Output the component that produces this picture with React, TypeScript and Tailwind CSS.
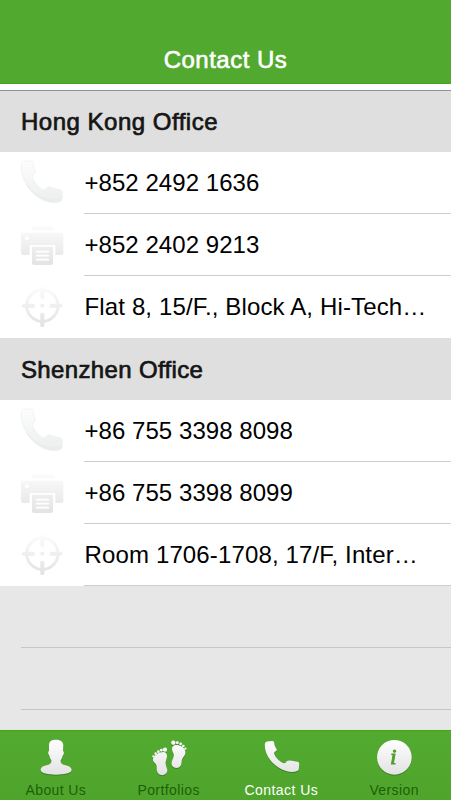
import type { ReactNode } from "react";

const offices = [
  {
    name: "Hong Kong Office",
    phone: "+852 2492 1636",
    fax: "+852 2402 9213",
    address: "Flat 8, 15/F., Block A, Hi-Tech…"
  },
  {
    name: "Shenzhen Office",
    phone: "+86 755 3398 8098",
    fax: "+86 755 3398 8099",
    address: "Room 1706-1708, 17/F, Inter…"
  }
];

function PhoneIcon() {
  return (
    <svg viewBox="24 6 144 186" className="h-[62px] w-12 shrink-0" aria-hidden>
      <defs>
        <linearGradient id="phone" x1="0" y1="0" x2="0" y2="1">
          <stop offset="0" stopColor="#fdfdfd" />
          <stop offset="1" stopColor="#ebeeed" />
        </linearGradient>
      </defs>
      <path
        d="M34 43C34 36 39 33 47 33L62 33C68 33 70 36 70 41C70 50 72 58 76 65C78 69 67 75 67 81C68 91 87 114 98 119C106 121 109 110 117 110C127 111 137 118 150 119C155 120 158 124 157 131L156 148C155 155 146 158 133 158C102 158 69 136 51 107C39 88 33 64 34 43Z"
        fill="url(#phone)"
        stroke="#eaefee"
        strokeWidth="2"
      />
      <path d="M51 105C70 132 99 151 128 150C141 149 149 147 156 143" fill="none" stroke="#e3e7e6" strokeWidth="2" />
    </svg>
  );
}

function PrinterIcon() {
  return (
    <svg viewBox="24 192 144 186" className="h-[62px] w-12 shrink-0" aria-hidden>
      <defs>
        <linearGradient id="printer" gradientUnits="userSpaceOnUse" x1="0" y1="226" x2="0" y2="345">
          <stop offset="0" stopColor="#fcfcfc" />
          <stop offset="1" stopColor="#e3e3e3" />
        </linearGradient>
      </defs>
      <g fill="url(#printer)">
        <path d="M66 229H130V241H66Z" />
        <path d="M36 248H157Q160 248 160 251V309Q160 315 154 315H136V285H59V315H39Q33 315 33 309V251Q33 248 36 248Z" />
        <path d="M66 290H129V340Q129 345 124 345H71Q66 345 66 340Z" />
      </g>
      <circle cx="51" cy="265" r="6" fill="#fff" />
      <path d="M80 305H115M80 317H115M80 329H115" stroke="#fff" strokeWidth="5" strokeLinecap="round" />
    </svg>
  );
}

function TargetIcon() {
  return (
    <svg viewBox="24 378 144 186" className="h-[62px] w-12 shrink-0" aria-hidden>
      <defs>
        <linearGradient id="target" gradientUnits="userSpaceOnUse" x1="0" y1="412" x2="0" y2="530">
          <stop offset="0" stopColor="#fcfcfc" />
          <stop offset="1" stopColor="#e1e1e1" />
        </linearGradient>
      </defs>
      <circle cx="97" cy="467" r="47" fill="none" stroke="url(#target)" strokeWidth="9" />
      <g fill="url(#target)">
        <rect x="91" y="409" width="12" height="37" rx="5" />
        <rect x="91" y="488" width="12" height="43" rx="5" />
        <path d="M33 467L41 461H70Q75 461 75 467Q75 473 70 473H41Z" />
        <path d="M160 467L152 461H124Q119 461 119 467Q119 473 124 473H152Z" />
        <circle cx="97" cy="467" r="6" />
      </g>
    </svg>
  );
}

function Row({ icon, children }: { icon: ReactNode; children: ReactNode }) {
  return (
    <li className="flex h-[62px] bg-white pl-[18px] tracking-[0.05px] last:tracking-[0.14px]">
      {icon}
      <div className="ml-[18px] flex min-w-0 flex-1 items-center border-b border-[#cdcdcf] pl-[0.5px] whitespace-nowrap text-black">
        {children}
      </div>
    </li>
  );
}

function TabIcon({ viewBox, children }: { viewBox: string; children: ReactNode }) {
  return (
    <svg viewBox={viewBox} className="size-10 drop-shadow-[0_1px_0.5px_rgba(30,80,10,0.45)]" fill="url(#tab)" aria-hidden>
      <defs>
        <linearGradient id="tab" gradientUnits="userSpaceOnUse" x1="0" y1="44" x2="0" y2="150">
          <stop offset="0" stopColor="#ffffff" />
          <stop offset="1" stopColor="#e2e2e2" />
        </linearGradient>
      </defs>
      {children}
    </svg>
  );
}

const tabs = [
  {
    label: "About Us",
    icon: (
      <TabIcon viewBox="109 36 120 120">
        <path d="M148 60C148 49 156 44 167 44C182 43 191 50 191 61L190 78C194 80 193 90 189 92C188 98 185 102 183 106C182 116 188 119 198 121C209 123 216 128 216 136C214 145 193 149 169 149C145 149 125 145 123 136C122 128 129 123 140 121C151 119 156 115 155 106C152 102 150 97 149 92C145 89 144 80 148 78Z" />
      </TabIcon>
    )
  },
  {
    label: "Portfolios",
    icon: (
      <TabIcon viewBox="447 36 120 120">
        <path d="M459 101C462 89 480 80 492 81C504 84 502 97 498 107C494 119 501 127 502 136C502 147 491 152 483 150C473 148 469 138 470 127C471 113 457 113 459 101Z" />
        <circle cx="495" cy="74" r="6.5" />
        <circle cx="484" cy="76" r="4.4" />
        <circle cx="475" cy="80" r="4.2" />
        <circle cx="467" cy="86" r="4" />
        <circle cx="460" cy="94" r="3.6" />
        <path d="M516 72C516 62 524 58 535 61C549 64 558 74 556 85C554 95 546 98 545 109C545 120 541 129 529 129C518 128 513 120 515 111C517 102 523 96 521 88C520 83 516 79 516 72Z" />
        <circle cx="520" cy="53" r="6.5" />
        <circle cx="532" cy="53" r="4.4" />
        <circle cx="542" cy="57" r="4.2" />
        <circle cx="550" cy="63" r="4" />
        <circle cx="556" cy="71" r="3.6" />
      </TabIcon>
    )
  },
  {
    label: "Contact Us",
    active: true,
    icon: (
      <TabIcon viewBox="110.6 36 120 120">
        <path d="M119 59C119 51 124 49 131 49L142 48C147 48 147 52 148 58C148 65 155 71 155 75C154 79 147 79 147 86C149 96 166 112 176 115C183 116 182 107 190 107C199 106 208 110 217 110C222 111 223 115 222 122L221 133C219 140 207 141 198 141C158 138 117 98 119 59Z" />
      </TabIcon>
    )
  },
  {
    label: "Version",
    icon: (
      <TabIcon viewBox="448.9 36 120 120">
        <circle cx="507" cy="97" r="52" />
        <text
          x="504"
          y="118"
          textAnchor="middle"
          fill="#4d9f2a"
          stroke="#4d9f2a"
          strokeWidth="3"
          className="font-['Liberation_Serif',serif] text-[66px] italic"
        >
          i
        </text>
      </TabIcon>
    )
  }
];

export default function App() {
  return (
    <div className="flex h-[800px] w-[451px] flex-col overflow-hidden bg-[#e7e7e7] font-['Liberation_Sans',Arial,sans-serif] text-2xl">
      <header className="flex h-[84px] shrink-0 items-end justify-center border-b border-[#45a11f] bg-[#52a92f] pb-[7px]">
        <h1 className="text-[24px] leading-8 tracking-[0.5px] text-white [-webkit-text-stroke:0.6px_white]">
          Contact Us
        </h1>
      </header>

      <main className="flex-1 border-t-[6px] border-white">
        {offices.map((office) => (
          <section key={office.name} className="group">
            <h2 className="flex h-[62px] items-center border-t border-[#dfdfdf] bg-[#dfdfdf] pt-px pl-[21px] tracking-[0.35px] text-[#151515] [-webkit-text-stroke:0.7px_#151515] group-first:border-[#929292] group-first:tracking-[0.5px]">
              {office.name}
            </h2>
            <ul className="group-first:[&>li:last-child>div]:border-white">
              <Row icon={<PhoneIcon />}>{office.phone}</Row>
              <Row icon={<PrinterIcon />}>{office.fax}</Row>
              <Row icon={<TargetIcon />}>{office.address}</Row>
            </ul>
          </section>
        ))}
        <div className="ml-[21px] h-[62px] border-b border-[#c6c6c6]" />
        <div className="ml-[21px] h-[62px] border-b border-[#c6c6c6]" />
      </main>

      <nav className="grid h-[70px] shrink-0 grid-cols-4 border-t border-[#45a510] bg-linear-to-b from-[#53aa30] to-[#4fa52b]">
        {tabs.map((tab) => (
          <a key={tab.label} className="flex flex-col items-center pt-1.5">
            {tab.icon}
            <span
              className={
                tab.active
                  ? "mt-[3px] pr-px text-[14px] leading-5 tracking-[0.45px] text-white"
                  : "mt-[3px] pr-px text-[14px] leading-5 tracking-[0.4px] text-[#1d5f08]"
              }
            >
              {tab.label}
            </span>
          </a>
        ))}
      </nav>
    </div>
  );
}
